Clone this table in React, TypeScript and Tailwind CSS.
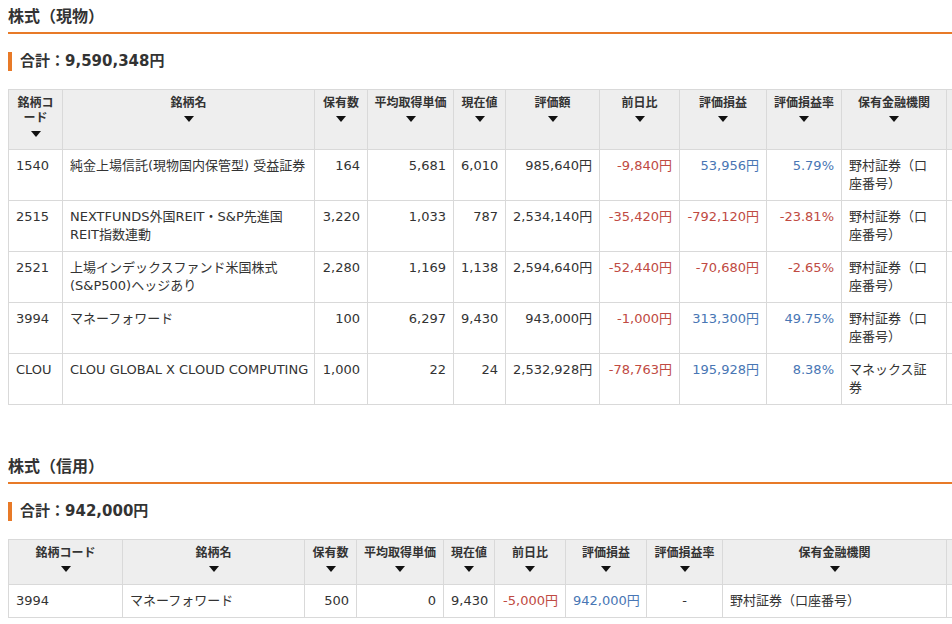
import React from "react";

const FONT = "font-['DejaVu_Sans','Noto_Sans_CJK_JP',sans-serif]";
const RED = "text-[#c04a42]";
const BLUE = "text-[#4876b4]";

function Tri() {
  return (
    <svg width="10" height="6" viewBox="0 0 10 6" className="inline-block align-middle">
      <polygon points="0,0 10,0 5,6" fill="#111" />
    </svg>
  );
}

function Th({ children }: { children: React.ReactNode }) {
  return (
    <th className="border border-[#d9d9d9] bg-[#eeeeee] px-[6px] pt-[6px] pb-[8px] align-top text-center text-[12px] font-bold leading-[15px] whitespace-nowrap text-[#333]">
      <div>{children}</div>
      <div className="h-[15px] flex items-center justify-center">
        <Tri />
      </div>
    </th>
  );
}

function Td({
  children,
  align = "left",
  color = "",
}: {
  children?: React.ReactNode;
  align?: "left" | "right" | "center";
  color?: string;
}) {
  const a = align === "right" ? "text-right" : align === "center" ? "text-center" : "text-left";
  return (
    <td
      className={`border border-[#d9d9d9] px-[7px] py-[7px] align-top text-[13px] leading-[18px] whitespace-nowrap ${a} ${color || "text-[#333]"}`}
    >
      {children}
    </td>
  );
}

function SectionTitle({ title, total }: { title: string; total: string }) {
  return (
    <>
      <div className="pt-[7px] pb-[5px] border-b-2 border-[#e87a28]">
        <h2 className="text-[16px] font-bold leading-[20px] text-[#333]">{title}</h2>
      </div>
      <div className="mt-[18px] flex items-center border-l-4 border-[#e87a28] pl-[8px] h-[19px]">
        <span className="text-[15px] font-bold leading-[19px] text-[#333]">合計：{total}</span>
      </div>
    </>
  );
}

type Row1 = {
  code: string;
  name: React.ReactNode;
  qty: string;
  avg: string;
  now: string;
  val: string;
  day: string;
  pl: string;
  plr: string;
  plPos: boolean;
  inst: React.ReactNode;
};

const nomura = (
  <>
    野村証券（口
    <br />
    座番号）
  </>
);

const rows1: Row1[] = [
  {
    code: "1540",
    name: "純金上場信託(現物国内保管型) 受益証券",
    qty: "164",
    avg: "5,681",
    now: "6,010",
    val: "985,640円",
    day: "-9,840円",
    pl: "53,956円",
    plr: "5.79%",
    plPos: true,
    inst: nomura,
  },
  {
    code: "2515",
    name: (
      <>
        NEXTFUNDS外国REIT・S&amp;P先進国
        <br />
        REIT指数連動
      </>
    ),
    qty: "3,220",
    avg: "1,033",
    now: "787",
    val: "2,534,140円",
    day: "-35,420円",
    pl: "-792,120円",
    plr: "-23.81%",
    plPos: false,
    inst: nomura,
  },
  {
    code: "2521",
    name: (
      <>
        上場インデックスファンド米国株式
        <br />
        (S&amp;P500)ヘッジあり
      </>
    ),
    qty: "2,280",
    avg: "1,169",
    now: "1,138",
    val: "2,594,640円",
    day: "-52,440円",
    pl: "-70,680円",
    plr: "-2.65%",
    plPos: false,
    inst: nomura,
  },
  {
    code: "3994",
    name: "マネーフォワード",
    qty: "100",
    avg: "6,297",
    now: "9,430",
    val: "943,000円",
    day: "-1,000円",
    pl: "313,300円",
    plr: "49.75%",
    plPos: true,
    inst: nomura,
  },
  {
    code: "CLOU",
    name: "CLOU GLOBAL X CLOUD COMPUTING",
    qty: "1,000",
    avg: "22",
    now: "24",
    val: "2,532,928円",
    day: "-78,763円",
    pl: "195,928円",
    plr: "8.38%",
    plPos: true,
    inst: (
      <>
        マネックス証
        <br />券
      </>
    ),
  },
];

export default function App() {
  return (
    <div className={`w-[952px] h-[624px] overflow-hidden bg-white ${FONT}`}>
      <div className="pl-[8px] w-[1100px]">
        <div className="w-[944px]">
          <SectionTitle title="株式（現物）" total="9,590,348円" />
        </div>
        <table className="mt-[18px] table-fixed border-collapse w-[1038px]">
          <colgroup>
            <col className="w-[54px]" />
            <col className="w-[252px]" />
            <col className="w-[53px]" />
            <col className="w-[86px]" />
            <col className="w-[52px]" />
            <col className="w-[94px]" />
            <col className="w-[80px]" />
            <col className="w-[87px]" />
            <col className="w-[75px]" />
            <col className="w-[105px]" />
            <col className="w-[100px]" />
          </colgroup>
          <thead>
            <tr>
              <Th>
                銘柄コ
                <br />
                ード
              </Th>
              <Th>銘柄名</Th>
              <Th>保有数</Th>
              <Th>平均取得単価</Th>
              <Th>現在値</Th>
              <Th>評価額</Th>
              <Th>前日比</Th>
              <Th>評価損益</Th>
              <Th>評価損益率</Th>
              <Th>保有金融機関</Th>
              <th className="border border-[#d9d9d9] bg-[#eeeeee]"></th>
            </tr>
          </thead>
          <tbody>
            {rows1.map((r) => (
              <tr key={r.code}>
                <Td>{r.code}</Td>
                <Td>{r.name}</Td>
                <Td align="right">{r.qty}</Td>
                <Td align="right">{r.avg}</Td>
                <Td align="right">{r.now}</Td>
                <Td align="right">{r.val}</Td>
                <Td align="right" color={RED}>
                  {r.day}
                </Td>
                <Td align="right" color={r.plPos ? BLUE : RED}>
                  {r.pl}
                </Td>
                <Td align="right" color={r.plPos ? BLUE : RED}>
                  {r.plr}
                </Td>
                <Td>{r.inst}</Td>
                <Td />
              </tr>
            ))}
          </tbody>
        </table>

        <div className="mt-[45px] w-[944px]">
          <SectionTitle title="株式（信用）" total="942,000円" />
        </div>
        <table className="mt-[18px] table-fixed border-collapse w-[1038px]">
          <colgroup>
            <col className="w-[114px]" />
            <col className="w-[182px]" />
            <col className="w-[52px]" />
            <col className="w-[87px]" />
            <col className="w-[51px]" />
            <col className="w-[71px]" />
            <col className="w-[81px]" />
            <col className="w-[76px]" />
            <col className="w-[224px]" />
            <col className="w-[100px]" />
          </colgroup>
          <thead>
            <tr>
              <Th>銘柄コード</Th>
              <Th>銘柄名</Th>
              <Th>保有数</Th>
              <Th>平均取得単価</Th>
              <Th>現在値</Th>
              <Th>前日比</Th>
              <Th>評価損益</Th>
              <Th>評価損益率</Th>
              <Th>保有金融機関</Th>
              <th className="border border-[#d9d9d9] bg-[#eeeeee]"></th>
            </tr>
          </thead>
          <tbody>
            <tr>
              <Td>3994</Td>
              <Td>マネーフォワード</Td>
              <Td align="right">500</Td>
              <Td align="right">0</Td>
              <Td align="right">9,430</Td>
              <Td align="right" color={RED}>
                -5,000円
              </Td>
              <Td align="right" color={BLUE}>
                942,000円
              </Td>
              <Td align="center">-</Td>
              <Td>野村証券（口座番号）</Td>
              <Td />
            </tr>
          </tbody>
        </table>
      </div>
    </div>
  );
}
